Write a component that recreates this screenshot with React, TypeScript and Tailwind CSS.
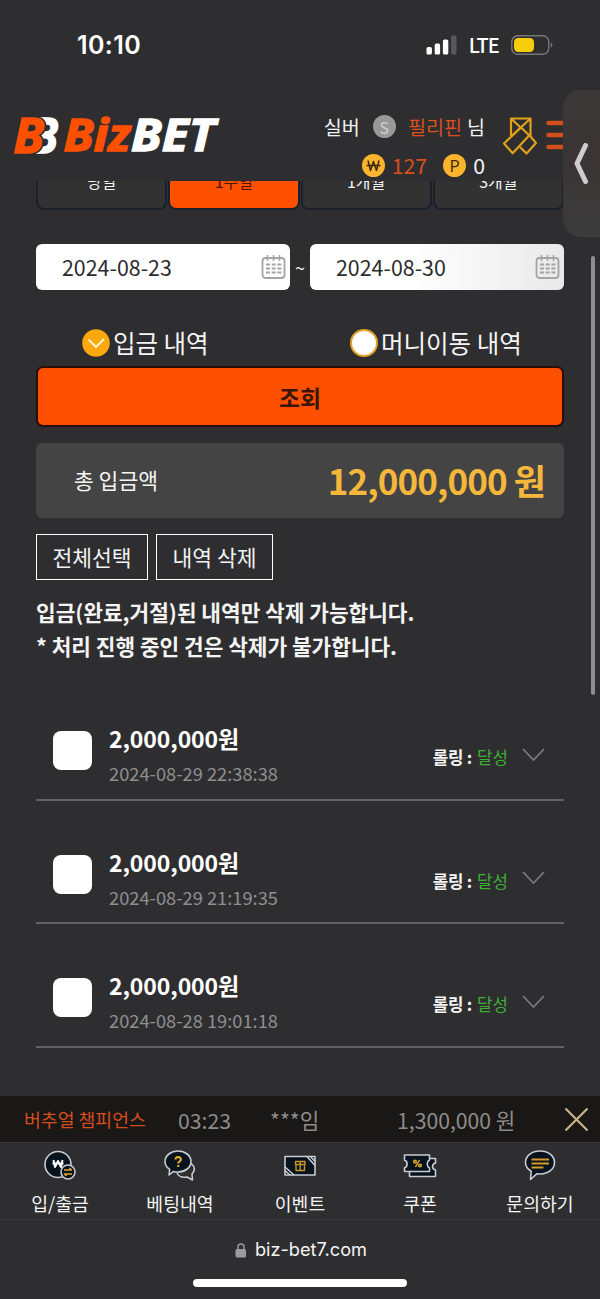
import React from 'react';

const history = [
  { amount: '2,000,000원', date: '2024-08-29 22:38:38' },
  { amount: '2,000,000원', date: '2024-08-29 21:19:35' },
  { amount: '2,000,000원', date: '2024-08-28 19:01:18' },
];

export default function App() {
  return (
    <div className="relative w-[600px] h-[1299px] overflow-hidden flex flex-col bg-[#2e2e30] text-[#f4f4f4] font-['Noto_Sans_CJK_KR',sans-serif] whitespace-nowrap">
      <StatusBar />
      <Header />
      <main className="h-[915px] px-9 overflow-hidden">
        <PeriodTabs />
        <DateRange />
        <TypeRadios />
        <button className="w-full h-[61px] mt-[5px] block rounded-[7px] border-2 border-[#2a0d04] bg-[#ff5000] text-[#3a1608] text-[22.8px] font-bold leading-[59px]">
          조회
        </button>
        <div className="h-[75px] mt-4 pl-[38px] pr-[19px] rounded-md bg-[#444444] flex items-center justify-between">
          <span className="text-[21.5px]">총 입금액</span>
          <span className="text-[35px] tracking-[-0.9px] font-bold text-[#f4b73b]">12,000,000 원</span>
        </div>
        <div className="flex gap-2 mt-4">
          <button className="w-[112px] h-[46px] border border-white text-[21.5px]">전체선택</button>
          <button className="w-[117px] h-[46px] border border-white text-[21.5px]">내역 삭제</button>
        </div>
        <p className="mt-[15px] text-[21.35px] leading-[34px] font-bold">
          입금(완료,거절)된 내역만 삭제 가능합니다.
          <br />* 처리 진행 중인 건은 삭제가 불가합니다.
        </p>
        <HistoryList />
      </main>
      <Ticker />
      <BottomNav />
      <AddressBar />
      <SideHandle />
      <div className="absolute left-[591px] top-[256px] w-[4px] h-[439px] rounded-full bg-[#8e8e90]" />
    </div>
  );
}

function StatusBar() {
  return (
    <div className="h-[90px] pl-[77px] pr-[47px] flex items-center justify-between">
      <span className="pt-[2px] font-['Inter',sans-serif] font-semibold text-[25px] tracking-[0.4px] text-white">10:10</span>
      <div className="flex items-center gap-3">
        <svg width="31" height="20" viewBox="0 0 31 20" fill="#fff">
          <rect x="0.5" y="12" width="5.4" height="7.5" rx="1.6" />
          <rect x="8.7" y="8.5" width="5.4" height="11" rx="1.6" />
          <rect x="16.9" y="4.5" width="5.4" height="15" rx="1.6" />
          <rect x="25.1" y="0.5" width="5.4" height="19" rx="1.6" fill="#59595b" />
        </svg>
        <span className="font-medium text-[20px] tracking-[-0.8px] text-white">LTE</span>
        <svg width="42" height="20" viewBox="0 0 42 20">
          <rect x="0.8" y="0.8" width="37" height="18.4" rx="6" fill="none" stroke="#77777a" strokeWidth="1.4" />
          <rect x="3" y="3" width="20" height="14" rx="4.2" fill="#f7cd0b" />
          <path d="M39.8 7.3v5.4q1.7-.9 1.7-2.7t-1.7-2.7z" fill="#77777a" />
        </svg>
      </div>
    </div>
  );
}

function Header() {
  return (
    <header className="h-[91px] pl-[12px] flex items-start">
      <svg className="mt-[20px]" width="212" height="52" viewBox="12 110 212 52" fontFamily="Open Sans" fontWeight="700" fontStyle="italic">
        <text x="31" y="152.5" fontSize="48" textLength="27" lengthAdjust="spacingAndGlyphs" fill="#fff" stroke="#fff" strokeWidth="1.5">B</text>
        <text x="13.5" y="152.5" fontSize="48" textLength="31" lengthAdjust="spacingAndGlyphs" fill="#2e2e30" stroke="#2e2e30" strokeWidth="4.5">B</text>
        <text x="13.5" y="152.5" fontSize="48" textLength="31" lengthAdjust="spacingAndGlyphs" fill="#ff5000" stroke="#ff5000" strokeWidth="1.4">B</text>
        <g strokeWidth="1.4">
          <text x="63.500" y="151" fontSize="45" textLength="67" lengthAdjust="spacingAndGlyphs" fill="#ff5000" stroke="#ff5000">Biz</text>
          <text x="131" y="151" fontSize="45" textLength="84" lengthAdjust="spacingAndGlyphs" fill="#fff" stroke="#fff">BET</text>
        </g>
      </svg>
      <div className="w-[261px] mt-[18px] flex flex-col items-end text-[20px]">
        <div className="h-[37px] flex items-center text-[19.6px]">
          <span>실버</span>
          <Coin letter="S" className="ml-[13px] mr-[12px] bg-[#999999] text-[#d0d0d0]" />
          <span className="text-[#d9501e]">필리핀</span>
          <span className="ml-[5px]">님</span>
        </div>
        <div className="h-[40px] flex items-center text-[21.3px] leading-[30px]">
          <WonCoin />
          <span className="text-[#d9501e]">127</span>
          <Coin letter="P" className="ml-[16px] mr-[7px] bg-[#fbb42c] text-[#3b2c10]" />
          <span>0</span>
        </div>
      </div>
      <svg className="mt-[22px] ml-[16px]" width="66" height="50" viewBox="501 112 66 50" fill="none">
        <g stroke="#e0a01a" strokeWidth="2.200" strokeLinejoin="round">
          <path d="M511 136V118.500h19.500V137M511 118.500l9.500 9M530.500 118.500l-19.500 18" />
          <path d="M521 127.500l-17 16 8.700 9.700L530 134.500" />
          <path d="M521 127.500l9.500 9 5.500 6.500-9.500 10.500-6.500-6.500" />
        </g>
        <path d="M548.500 123h18M548.500 135h18M548.500 147h18" stroke="#d44d1c" strokeWidth="4.600" strokeLinecap="round" />
      </svg>
    </header>
  );
}

function Coin({ letter, className }: { letter: string; className: string }) {
  return (
    <span className={`size-[23px] rounded-full flex items-center justify-center text-[16px] leading-none ${className}`}>
      {letter}
    </span>
  );
}

function WonCoin() {
  return (
    <svg className="mr-[7px]" width="23" height="23" viewBox="0 0 23 23" fill="none" stroke="#3b2c10" strokeWidth="1.500">
      <circle cx="11.500" cy="11.500" r="11.500" fill="#fbb42c" stroke="none" />
      <path d="M6 6.500l2.500 10 3-9 3 9 2.500-10M4.500 11.500h14" strokeLinejoin="round" />
    </svg>
  );
}

function PeriodTabs() {
  const tabs = ['당일', '1주일', '1개월', '3개월'];
  return (
    <div className="h-[29px] flex items-end gap-[1px] overflow-hidden">
      {tabs.map((t) => (
        <div
          key={t}
          className={`flex-1 h-14 rounded-lg border-2 border-[#1a212b] text-center text-[16px] leading-[50px] ${
            t === '1주일' ? 'bg-[#ff5000] text-[#4a1605]' : 'bg-[#323232]'
          }`}
        >
          {t}
        </div>
      ))}
    </div>
  );
}

function DateRange() {
  return (
    <div className="mt-[34px] flex items-center justify-between">
      <DateInput value="2024-08-23" className="bg-white" />
      <span className="text-[18px] leading-none">~</span>
      <DateInput value="2024-08-30" className="bg-linear-to-r from-white from-40% to-[#e9e9e9]" />
    </div>
  );
}

function DateInput({ value, className }: { value: string; className: string }) {
  return (
    <div className={`w-[254px] h-[46px] pl-[26px] pr-1 rounded-md flex items-center justify-between text-[#2c2c2c] ${className}`}>
      <span className="text-[21.4px]">{value}</span>
      <svg width="25" height="26" viewBox="0 0 25 26" fill="none" stroke="#a4a4a4">
        <rect x="1.500" y="4" width="22" height="20" rx="3" strokeWidth="1.800" />
        <path d="M6.500 1v6M12.500 1v6M18.500 1v6" strokeWidth="1.500" />
        <path d="M5 10.500h15.500M5 14.500h15.500M5 18.500h15.500" strokeWidth="1.800" strokeDasharray="4 1.700" />
      </svg>
    </div>
  );
}

function TypeRadios() {
  return (
    <div className="h-[36px] mt-[35px] flex text-[24.500px] items-center">
      <div className="w-[268px] pl-[46px] flex items-center gap-[3px]">
        <svg width="28" height="28" viewBox="0 0 28 28">
          <circle cx="14" cy="14" r="13.800" fill="#fda90d" />
          <path d="M6.500 10.500l7.500 7.500 8-8" fill="none" stroke="#fff3d0" strokeWidth="2" />
        </svg>
        <span>입금 내역</span>
      </div>
      <div className="pl-[46px] flex items-center gap-[3px]">
        <span className="size-[28px] rounded-full border-2 border-[#e0a02a] bg-white" />
        <span>머니이동 내역</span>
      </div>
    </div>
  );
}

function HistoryList() {
  return (
    <ul className="mt-[14px]">
      {history.map((h) => (
        <li key={h.date} className="h-[123.500px] pt-[44px] pl-[17px] pr-[19px] border-b-2 border-[#626263] flex items-start">
          <span className="size-[39px] mt-[10px] rounded-lg bg-white" />
          <div className="ml-[17px] flex-1">
            <div className="text-[23px] leading-[34px] tracking-[-0.1px] font-bold text-white">{h.amount}</div>
            <div className="text-[18.300px] leading-[36px] text-[#8f8f90]">{h.date}</div>
          </div>
          <div className="mt-[21px] flex items-center text-[16.800px] leading-[30px]">
            <span className="font-bold tracking-[-0.2px]">롤링 :</span>
            <span className="ml-[5px] text-[#3fae36]">달성</span>
            <svg className="ml-[14px] -mt-[5px]" width="23" height="14" viewBox="0 0 23 14" fill="none" stroke="#7b7b7c" strokeWidth="1.800">
              <path d="M1 1l10.500 11L22 1" />
            </svg>
          </div>
        </li>
      ))}
    </ul>
  );
}

function Ticker() {
  return (
    <div className="h-[46px] pt-[1px] pl-6 pr-[11px] flex items-center bg-[#1a1816] text-[21.200px] text-[#8e8c8a]">
      <span className="w-[154px] text-[18.300px] text-[#d44d1c]">버추얼 챔피언스</span>
      <span className="w-[92px]">03:23</span>
      <span className="w-[127px]">***임</span>
      <span className="flex-1">1,300,000 원</span>
      <svg width="25" height="25" viewBox="0 0 25 25" fill="none" stroke="#c9b48a" strokeWidth="2.200">
        <path d="M1.500 1.500l22 22M23.500 1.500l-22 22" />
      </svg>
    </div>
  );
}

function BottomNav() {
  const items = [
    { label: '입/출금', icon: <CashIcon /> },
    { label: '베팅내역', icon: <BetIcon /> },
    { label: '이벤트', icon: <EventIcon /> },
    { label: '쿠폰', icon: <CouponIcon /> },
    { label: '문의하기', icon: <AskIcon /> },
  ];
  return (
    <nav className="h-[78px] flex border-t border-b border-[#38383a]">
      {items.map((item) => (
        <div key={item.label} className="flex-1 pt-[6px] flex flex-col items-center">
          <svg width="34" height="34" viewBox="0 0 34 34" fill="#08131e" stroke="#c8cbd0" strokeWidth="1.600" strokeLinejoin="round">
            {item.icon}
          </svg>
          <span className="mt-[6px] text-[18.300px] leading-[28px]">{item.label}</span>
        </div>
      ))}
    </nav>
  );
}

function CashIcon() {
  return (
    <>
      <circle cx="15" cy="15.500" r="13" />
      <path d="M10.500 11l1.500 7 3-6 3 6 1.500-7M9.500 14.500h11" fill="none" stroke="#fff" strokeWidth="2" />
      <circle cx="25" cy="23" r="7" />
      <path d="M21 21h7.500l-2-2M29 25h-7.500l2 2" fill="none" stroke="#dfa52d" />
    </>
  );
}

function BetIcon() {
  return (
    <>
      <path d="M28 14.500c5 4 3.500 8 1 10.500l.5 6-5.500-3c-5 1-8.500-1-10-4" fill="#2e2e30" />
      <path d="M15 2c7 0 13 4.500 13 10.500S22 23 15 23c-1.500 0-3-.2-4.500-.6L6 26l.7-5.500C4 18.500 2 15.800 2 12.500 2 6.500 8 2 15 2z" />
      <path d="M12.500 10.500c0-3.500 5.400-3.500 5.400 0 0 2-2.700 2-2.700 4M15.200 16v2" fill="none" stroke="#e8b024" strokeWidth="2" />
    </>
  );
}

function EventIcon() {
  return (
    <>
      <path d="M2 7.500h30v18.500H2z" />
      <path d="M2 18l9 8M2 21.500l5 4.500M24 7.500l8 9M27.500 7.500l4.500 5" fill="none" />
      <path d="M13 15.500h8.500v6H13zM12.500 12.500h9.500v3h-9.500zM17.200 12.500v9" fill="none" stroke="#c6952b" strokeWidth="1.400" />
    </>
  );
}

function CouponIcon() {
  return (
    <>
      <path d="M6.500 9.500h26v4.500c-4 1-4 6 0 7v6.500h-26z" />
      <path d="M1.500 6h25v5c-3 1.500-3 6.500 0 8v3.500h-25V19c3.500-1.500 3.500-6.500 0-8z" />
      <path d="M12.500 18l4-7" fill="none" stroke="#dfa52d" strokeWidth="1.500" />
      <circle cx="12" cy="12.700" r="1.300" fill="none" stroke="#dfa52d" />
      <circle cx="17" cy="16.500" r="1.300" fill="none" stroke="#dfa52d" />
    </>
  );
}

function AskIcon() {
  return (
    <>
      <path d="M17 2c8.500 0 14.500 5 14.500 11.500S25.500 25 17 25c-1 0-2-.1-3-.3L7.500 30.500l.7-8.300C4.500 20 2.500 17 2.500 13.500 2.500 7 8.500 2 17 2z" />
      <path d="M8.500 10.500h17.500M8.500 14.500h17.500M8.500 18.500h12" fill="none" stroke="#d39a28" strokeWidth="1.800" />
    </>
  );
}

function AddressBar() {
  return (
    <footer className="h-[79px] pt-[15px] flex flex-col items-center">
      <div className="h-[30px] pl-[2px] flex items-center gap-2 font-['Inter',sans-serif] text-[18.200px]">
        <svg width="12" height="15" viewBox="0 0 12 15">
          <path d="M3 7V4a3 3 0 016 0v3" fill="none" stroke="#9b9b9e" strokeWidth="1.500" />
          <rect x="0.500" y="6" width="10.500" height="8.500" rx="1.500" fill="#9b9b9e" />
        </svg>
        <span>biz-bet7.com</span>
      </div>
      <div className="mt-[14px] w-[214px] h-2 rounded-full bg-white" />
    </footer>
  );
}

function SideHandle() {
  return (
    <div className="absolute left-[563px] top-[90px] w-[37px] h-[147px] rounded-l-[18px] bg-linear-to-b from-[#3c3837] via-[#3a3534] to-[#3c3c3d] flex items-center justify-center">
      <svg width="16" height="42" viewBox="0 0 16 42" fill="none" stroke="#cfccd0" strokeWidth="5" strokeLinecap="round" strokeLinejoin="round">
        <path d="M11.500 2.500L3 20.500l8.500 18" />
      </svg>
    </div>
  );
}
